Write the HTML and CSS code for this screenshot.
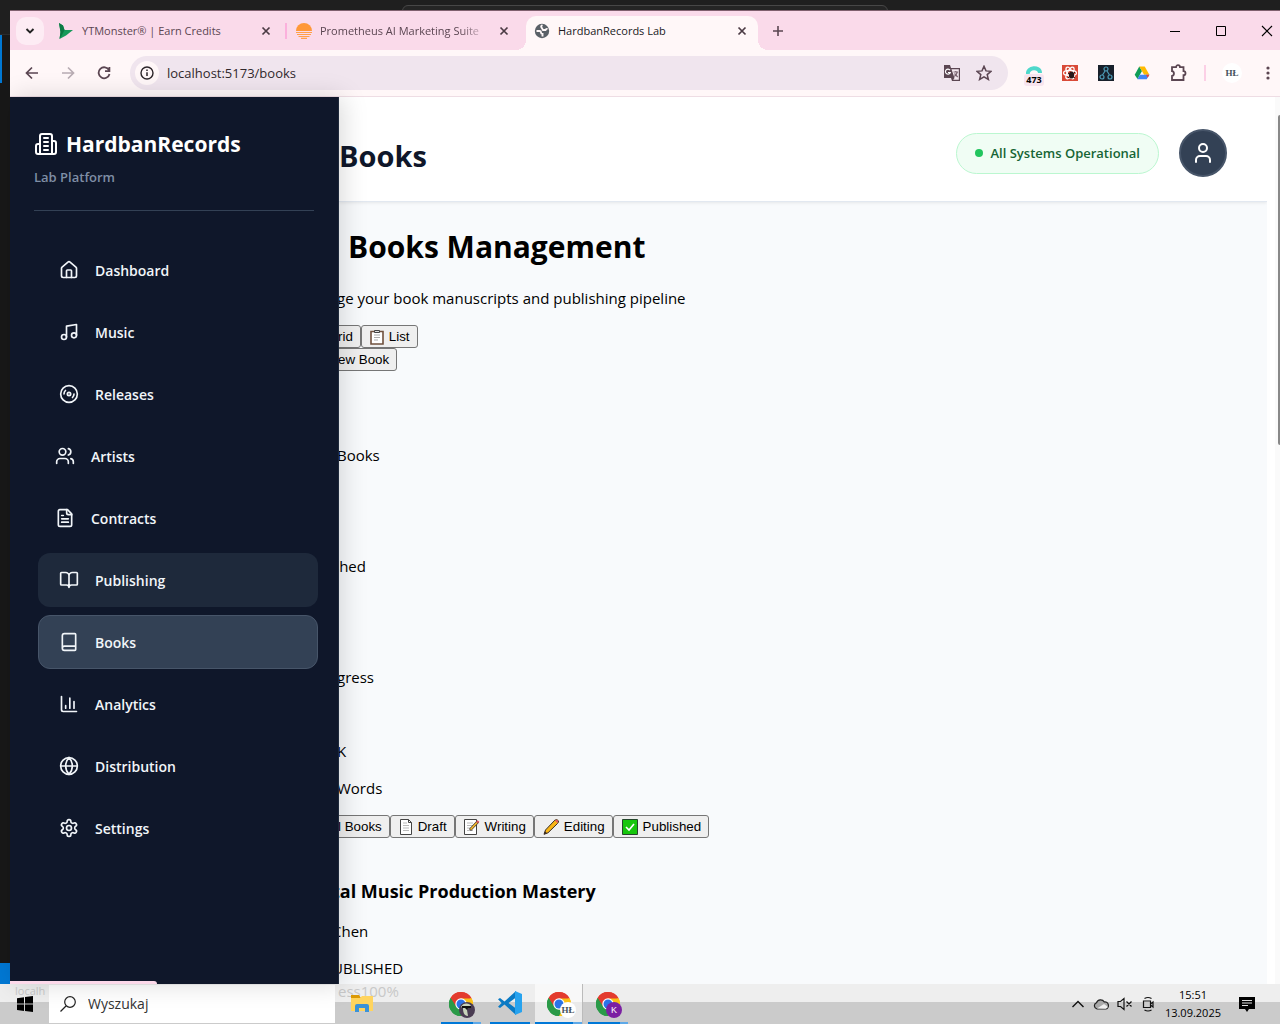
FILE: index.html
```html
<!DOCTYPE html>
<html lang="en">
<head>
<meta charset="utf-8">
<title>HardbanRecords Lab</title>
<link rel="stylesheet" href="styles.css">
</head>
<body>
<svg class="defs" aria-hidden="true">
  <symbol id="chrome" viewBox="0 0 24 24">
    <path fill="#e33b2e" d="M12 12 1.6 6A12 12 0 0 1 22.4 6z"/>
    <path fill="#fbc116" d="M12 12 22.4 6A12 12 0 0 1 12 24z"/>
    <path fill="#2a9a48" d="M12 12 12 24A12 12 0 0 1 1.6 6z"/>
    <path fill="#e33b2e" d="M12 6.4H22.6A12 12 0 0 0 1.6 6L7 14.8z"/>
    <path fill="#fbc116" d="M12 6.4H22.6A12 12 0 0 1 12 24l5-9z"/>
    <path fill="#2a9a48" d="M1.6 6 7.1 14.8 12 17.6h3.6L12 24A12 12 0 0 1 1.6 6z"/>
    <circle cx="12" cy="12" r="5.7" fill="#fff"/><circle cx="12" cy="12" r="4.5" fill="#2a73e8"/>
  </symbol>
  <symbol id="cross" viewBox="0 0 10 10"><path d="M1.5 1.5l7 7M8.5 1.5l-7 7" stroke="currentColor" stroke-width="1.7"/></symbol>
</svg>
<div class="desktop">
  <div class="editor-top"><div class="command-center"></div></div>
  <div class="workspace">
    <div class="editor-edge"><span class="edge-top"></span><span class="edge-mark"></span><span class="edge-fill"></span><span class="edge-status"></span></div>
    <div class="browser">
      <div class="tabs">
        <button class="tab-search" aria-label="Search tabs"><svg width="10" height="10" viewBox="0 0 10 10"><path d="M1.5 3 5 6.5 8.5 3" fill="none" stroke="#222" stroke-width="1.9"/></svg></button>
        <div class="tab">
          <svg width="16" height="16" viewBox="0 0 16 16"><path fill="#159a5a" d="M1 0 5 2.500 6.500 7 15 7 8 12.500 1.500 16 2.500 9z"/><path fill="#0b7a44" d="M1 0 5 2.500 6.500 7 4 12 1.500 16 2.500 9z"/></svg>
          <span class="tab-title">YTMonster® | Earn Credits</span>
          <button class="close" aria-label="Close"><svg width="10" height="10"><use href="#cross"/></svg></button>
        </div>
        <i class="tab-line"></i>
        <div class="tab second">
          <svg width="16" height="16" viewBox="0 0 16 16"><path fill="#ff9838" d="M0 8a8 8 0 0 1 16 0z"/><path d="M0 9.500h16M1 11.500h14M2.500 13.500h11M5 15.400h6" stroke="#ffa149" stroke-width="1.200"/></svg>
          <span class="tab-title fade">Prometheus AI Marketing Suite</span>
          <button class="close" aria-label="Close"><svg width="10" height="10"><use href="#cross"/></svg></button>
        </div>
        <div class="tab current">
          <svg width="16" height="16" viewBox="0 0 16 16"><circle cx="8" cy="8" r="7.200" fill="#5a6067"/><path d="M2.500 8h3q1.500 0 1.500 1.500T8.500 11v2.500M8.500 2.200Q6.500 3 7.500 4.500T9 7h2.500q.5-1.500 2-1" fill="none" stroke="#fff7f8" stroke-width="1.900"/></svg>
          <span class="tab-title">HardbanRecords Lab</span>
          <button class="close" aria-label="Close"><svg width="10" height="10"><use href="#cross"/></svg></button>
        </div>
        <button class="new-tab" aria-label="New tab"><svg width="12" height="12" viewBox="0 0 12 12"><path d="M6 1v10M1 6h10" stroke="#5b4652" stroke-width="1.600"/></svg></button>
        <div class="window-controls">
          <button aria-label="Minimize"><svg width="12" height="12" viewBox="0 0 12 12"><path d="M1 6.500h10" stroke="#000"/></svg></button>
          <button aria-label="Maximize"><svg width="12" height="12" viewBox="0 0 12 12"><path d="M1.500 1.500h9v9h-9z" fill="none" stroke="#000"/></svg></button>
          <button aria-label="Close window"><svg width="12" height="12" viewBox="0 0 12 12"><path d="M1 1l10 10M11 1 1 11" stroke="#000" stroke-width="1.100"/></svg></button>
        </div>
      </div>
      <div class="toolbar">
        <div class="nav-buttons">
          <button aria-label="Back"><svg width="14" height="14" viewBox="0 0 14 14"><path d="M13 7H2M7 1.500 1.500 7 7 12.500" fill="none" stroke="#5b4652" stroke-width="1.700"/></svg></button>
          <button aria-label="Forward"><svg width="14" height="14" viewBox="0 0 14 14"><path d="M1 7h11M7 1.500 12.500 7 7 12.500" fill="none" stroke="#b8acb3" stroke-width="1.700"/></svg></button>
          <button aria-label="Reload"><svg width="14" height="14" viewBox="0 0 14 14"><path d="M12 4.200A5.500 5.500 0 1 0 12.500 8M12.400 1v4.200H8" fill="none" stroke="#5b4652" stroke-width="1.800"/></svg></button>
        </div>
        <div class="omnibox">
          <button class="site-info" aria-label="Site information"><svg width="14" height="14" viewBox="0 0 14 14"><circle cx="7" cy="7" r="6" fill="none" stroke="#2c2529" stroke-width="1.400"/><path d="M7 6.200V10M7 3.600v1.500" stroke="#2c2529" stroke-width="1.500"/></svg></button>
          <input class="url" type="text" aria-label="Address" value="localhost:5173/books">
          <svg width="18" height="18" viewBox="0 0 18 18"><path d="M1 1h6l1 3h9v13H9l-1-3H1z" fill="#5b4652"/><path d="M8.500 5.300h7.300v10.500H10.200L11.500 14z" fill="#f4e8f0"/><path d="M10.500 8h4.700M12.800 7v1M14.300 8c-.5 2-1.500 3.500-3 4.500M11.500 9.500l3.200 3.500" fill="none" stroke="#7b6572" stroke-width="1.200"/><path d="M7 6.200A2.500 2.500 0 1 0 7.300 8.500H5" fill="none" stroke="#fff" stroke-width="1.200"/></svg>
          <svg class="star" width="16" height="16" viewBox="0 0 16 16"><path d="M8 1.300l2 4.600 5 .4-3.800 3.300 1.200 4.900L8 11.900l-4.400 2.600 1.200-4.900L1 6.300l5-.4z" fill="none" stroke="#5b4652" stroke-width="1.500"/></svg>
        </div>
        <div class="extensions">
          <span class="ext counter"><svg width="16" height="8" viewBox="0 0 16 8"><path d="M2 8C1 1 14 0 14 7" fill="none" stroke="#4fd8cb" stroke-width="4"/></svg><b>473</b></span>
          <span class="ext"><svg width="16" height="16" viewBox="0 0 16 16"><path fill="#d94a38" d="M0 0h16v16H0z"/><g fill="none" stroke="#fff" stroke-width="1.200"><ellipse cx="8" cy="8" rx="6.500" ry="2.600"/><ellipse cx="8" cy="8" rx="6.500" ry="2.600" transform="rotate(60 8 8)"/><ellipse cx="8" cy="8" rx="6.500" ry="2.600" transform="rotate(120 8 8)"/></g><ellipse cx="9.500" cy="10" rx="2.600" ry="3.500" fill="#27191a"/><path d="M6 8l7 5M13 7l-7 6" stroke="#27191a"/></svg></span>
          <span class="ext"><svg width="16" height="16" viewBox="0 0 16 16"><path fill="#18202b" d="M0 0h16v16H0z"/><g fill="none" stroke="#4d9bb6" stroke-width="1.200"><circle cx="8" cy="4" r="2"/><circle cx="4" cy="12" r="2"/><circle cx="12" cy="12" r="2"/><path d="M7 6 4.500 10M9 6l2.500 4"/></g></svg></span>
          <span class="ext"><svg width="16" height="16" viewBox="0 0 16 16"><path fill="#0f9d58" d="M5.300 1.500 8 6 3.500 14 .7 9.700z"/><path fill="#ffba00" d="M5.300 1.500h5.400l4.700 8.200h-5.300z"/><path fill="#4285f4" d="M5.900 9.700h9.500L12.700 14.300H3.300z"/><path fill="#ea4335" d="M12 9.700h3.400l-1.700 3z"/></svg></span>
          <span class="ext"><svg width="18" height="18" viewBox="0 0 18 18"><path d="M3 3.200h4a2 2 0 0 1 4 0h3.500v4a2 2 0 0 1 0 4V16H3v-4c2.600-.3 2.600-4.500 0-4.800z" fill="none" stroke="#5b4652" stroke-width="1.800"/></svg></span>
          <i class="ext-line"></i>
          <span class="profile">HŁ</span>
          <button class="menu" aria-label="Menu"><svg width="4" height="14" viewBox="0 0 4 14"><g fill="#5b4652"><circle cx="2" cy="2" r="1.600"/><circle cx="2" cy="7" r="1.600"/><circle cx="2" cy="12" r="1.600"/></g></svg></button>
        </div>
      </div>
      <div class="page">
        <aside class="sidebar">
          <div class="brand">
            <div class="brand-name"><svg class="line" width="24" height="24" viewBox="0 0 24 24"><path d="M6 22V4a2 2 0 0 1 2-2h8a2 2 0 0 1 2 2v18ZM6 12H4a2 2 0 0 0-2 2v6a2 2 0 0 0 2 2h2M18 9h2a2 2 0 0 1 2 2v9a2 2 0 0 1-2 2h-2M10 6h4M10 10h4M10 14h4M10 18h4"/></svg><strong>HardbanRecords</strong></div>
            <span class="tagline">Lab Platform</span>
          </div>
          <nav>
            <a href="#dashboard"><svg class="line" width="20" height="20" viewBox="0 0 24 24"><path d="M15 21v-8a1 1 0 0 0-1-1h-4a1 1 0 0 0-1 1v8"/><path d="M3 10a2 2 0 0 1 .709-1.528l7-5.999a2 2 0 0 1 2.582 0l7 5.999A2 2 0 0 1 21 10v9a2 2 0 0 1-2 2H5a2 2 0 0 1-2-2z"/></svg>Dashboard</a>
            <a href="#music"><svg class="line" width="20" height="20" viewBox="0 0 24 24"><path d="M9 18V5l12-2v13"/><circle cx="6" cy="18" r="3"/><circle cx="18" cy="16" r="3"/></svg>Music</a>
            <a href="#releases"><svg class="line" width="20" height="20" viewBox="0 0 24 24"><circle cx="12" cy="12" r="10"/><path d="M6 12c0-1.700.7-3.200 1.800-4.200M18 12c0 1.700-.7 3.200-1.800 4.200"/><circle cx="12" cy="12" r="2"/></svg>Releases</a>
            <a class="flat" href="#artists"><svg class="line" width="20" height="20" viewBox="0 0 24 24"><path d="M16 21v-2a4 4 0 0 0-4-4H6a4 4 0 0 0-4 4v2"/><circle cx="9" cy="7" r="4"/><path d="M22 21v-2a4 4 0 0 0-3-3.870M16 3.130a4 4 0 0 1 0 7.750"/></svg>Artists</a>
            <a class="flat" href="#contracts"><svg class="line" width="20" height="20" viewBox="0 0 24 24"><path d="M15 2H6a2 2 0 0 0-2 2v16a2 2 0 0 0 2 2h12a2 2 0 0 0 2-2V7Z"/><path d="M14 2v4a2 2 0 0 0 2 2h4M10 9H8M16 13H8M16 17H8"/></svg>Contracts</a>
            <a class="hovered" href="#publishing"><svg class="line" width="20" height="20" viewBox="0 0 24 24"><path d="M12 7v14M3 18a1 1 0 0 1-1-1V4a1 1 0 0 1 1-1h5a4 4 0 0 1 4 4 4 4 0 0 1 4-4h5a1 1 0 0 1 1 1v13a1 1 0 0 1-1 1h-6a3 3 0 0 0-3 3 3 3 0 0 0-3-3z"/></svg>Publishing</a>
            <a class="active" href="#books"><svg class="line" width="20" height="20" viewBox="0 0 24 24"><path d="M4 19.500v-15A2.500 2.500 0 0 1 6.500 2H19a1 1 0 0 1 1 1v18a1 1 0 0 1-1 1H6.500a1 1 0 0 1 0-5H20"/></svg>Books</a>
            <a href="#analytics"><svg class="line" width="20" height="20" viewBox="0 0 24 24"><path d="M3 3v16a2 2 0 0 0 2 2h16M18 17V9M13 17V5M8 17v-3"/></svg>Analytics</a>
            <a href="#distribution"><svg class="line" width="20" height="20" viewBox="0 0 24 24"><circle cx="12" cy="12" r="10"/><path d="M12 2a14.500 14.500 0 0 0 0 20 14.500 14.500 0 0 0 0-20M2 12h20"/></svg>Distribution</a>
            <a href="#settings"><svg class="line" width="20" height="20" viewBox="0 0 24 24"><path d="M12.220 2h-.44a2 2 0 0 0-2 2v.18a2 2 0 0 1-1 1.730l-.43.25a2 2 0 0 1-2 0l-.15-.08a2 2 0 0 0-2.730.73l-.22.38a2 2 0 0 0 .73 2.730l.15.1a2 2 0 0 1 1 1.720v.51a2 2 0 0 1-1 1.740l-.15.09a2 2 0 0 0-.73 2.730l.22.38a2 2 0 0 0 2.730.73l.15-.08a2 2 0 0 1 2 0l.43.25a2 2 0 0 1 1 1.730V20a2 2 0 0 0 2 2h.44a2 2 0 0 0 2-2v-.18a2 2 0 0 1 1-1.730l.43-.25a2 2 0 0 1 2 0l.15.08a2 2 0 0 0 2.730-.73l.22-.39a2 2 0 0 0-.73-2.730l-.15-.08a2 2 0 0 1-1-1.740v-.5a2 2 0 0 1 1-1.740l.15-.09a2 2 0 0 0 .73-2.730l-.22-.38a2 2 0 0 0-2.730-.73l-.15.08a2 2 0 0 1-2 0l-.43-.25a2 2 0 0 1-1-1.730V4a2 2 0 0 0-2-2z"/><circle cx="12" cy="12" r="3"/></svg>Settings</a>
          </nav>
          <div class="link-status"></div>
        </aside>
        <main>
          <header>
            <h1>Books</h1>
            <span class="health"><i></i>All Systems Operational</span>
            <button class="avatar" aria-label="Account"><svg class="line" width="24" height="24" viewBox="0 0 24 24"><path d="M19 21v-2a4 4 0 0 0-4-4H9a4 4 0 0 0-4 4v2"/><circle cx="12" cy="7" r="4"/></svg></button>
          </header>
          <section class="content">
            <h2>Books Management</h2>
            <p>ge your book manuscripts and publishing pipeline</p>
            <div class="buttons"><button class="under">rid</button><button><svg width="14" height="16" viewBox="1 0 14 16"><path fill="#fff" stroke="#70513e" stroke-width="1.600" d="M2 2.500h12v12.500H2z"/><path fill="#ddd" stroke="#444" d="M5.500 3.500v-2h5v2z"/><path stroke="#aaa" d="M5 6h6M5 8.500h6M5 11h4"/></svg>List</button></div>
            <div class="buttons"><button class="under">ew Book</button></div>
            <div class="stat"><span>Books</span></div>
            <div class="stat"><span class="under">shed</span></div>
            <div class="stat"><span>gress</span></div>
            <div class="stat"><span>K</span><span>Words</span></div>
            <div class="buttons"><button class="under">l Books</button><button><svg width="14" height="16" viewBox="1 0 14 16"><path fill="#fff" stroke="#444" d="M2.500.5h8l3 3v12h-11z"/><path stroke="#bbb" d="M5 4h4M5 6.500h6M5 9h6M5 11.500h6"/><path d="M10.500.5v3h3" fill="none" stroke="#444"/></svg>Draft</button><button><svg width="16" height="16" viewBox="0 0 16 16"><path fill="#fff" stroke="#444" d="M.5.500h12v15H.5z"/><path stroke="#bbb" d="M3 4h6M3 6.500h6M3 9h4M3 11.500h6"/><path d="M6 11 14 2.500" stroke="#3a3128" stroke-width="2.800"/><path d="M6.500 10.500 13 3.500" stroke="#f5b92d" stroke-width="1.800"/><path d="M13 3.500 14.500 2" stroke="#e35663" stroke-width="2.400"/></svg>Writing</button><button><svg width="16" height="16" viewBox="0 0 16 16"><path d="M1 15.300 2.500 11 11.800 1.200Q14-.2 15.300 1.700 16 3 14.500 4.500L5 13.800z" fill="#f9b514" stroke="#392c24"/><path d="M12 1.500Q14 0 15 2 15.500 3 14.300 4z" fill="#e35663"/><path d="M1 15.300l1-3 2 2z" fill="#392c24"/></svg>Editing</button><button><svg width="16" height="16" viewBox="0 0 16 16"><path fill="#16c60c" stroke="#24452b" d="M.5.500h15v15H.5z"/><path d="M4 8l3 3 5-6" fill="none" stroke="#fff" stroke-width="1.600"/></svg>Published</button></div>
            <h3 class="under">tal Music Production Mastery</h3>
            <p class="under">Chen</p>
            <p class="under">UBLISHED</p>
          </section>
        </main>
        <div class="scroll-track"><div class="scroll-thumb"></div></div>
      </div>
    </div>
  </div>
  <footer class="taskbar">
    <span class="ghost ghost-link">localh</span>
    <span class="ghost ghost-progress">ess100%</span>
    <button class="start" aria-label="Start"><svg width="16" height="16" viewBox="0 0 16 16"><path d="M0 2.200 7 1.200V7.600H0zM8 1 16 0v7.600H8zM0 8.500h7v6.400l-7-1zM8 8.500h8V16l-8-1z"/></svg></button>
    <label class="search"><svg width="16" height="16" viewBox="0 0 16 16"><circle cx="10" cy="6" r="5.300" fill="none" stroke="#222" stroke-width="1.200"/><path d="M6 10 .5 15.500" stroke="#222" stroke-width="1.200"/></svg><input type="text" placeholder="Wyszukaj" aria-label="Wyszukaj"></label>
    <button class="task explorer" aria-label="File Explorer"><svg width="22" height="20" viewBox="0 0 22 20"><path fill="#dc9a05" d="M0 1h8l2 3H0z"/><path fill="#ffd45e" d="M0 4h9l2-2h11v15H0z"/><path fill="#3a92d8" d="M4 18v-6q0-2 2-2h10q2 0 2 2v6h-4v-4H8v4z"/></svg></button>
    <button class="task running" aria-label="Chrome"><svg width="24" height="24"><use href="#chrome"/></svg><span class="badge photo"><svg width="16" height="16" viewBox="0 0 16 16"><circle cx="8" cy="8" r="8" fill="#4a3c52"/><path d="M2 5c2-5 9-4 10-1-2 1-4 1-4 4l1 6c-4 0-5-4-5-8z" fill="#c9d3bb"/><path d="M3 4h9v2H9L8 8 6 6H3z" fill="#111"/></svg></span></button>
    <button class="task solid" aria-label="Visual Studio Code"><svg width="24" height="24" viewBox="0 0 24 24"><path fill="#0a7ac4" d="M18 0 6.500 10.500 2 7 0 8.200 3.600 12 0 15.800 2 17 6.500 13.500 18 24V17.500L10.500 12 18 6.500z"/><path fill="#27a3ef" d="M17 0l7 3v18l-7 3z"/></svg></button>
    <button class="task running open" aria-label="Chrome, HardbanRecords"><svg width="24" height="24"><use href="#chrome"/></svg><span class="badge initials">HŁ</span></button>
    <button class="task running last" aria-label="Chrome, K"><svg width="24" height="24"><use href="#chrome"/></svg><span class="badge letter">K</span></button>
    <div class="tray">
      <svg width="14" height="16" viewBox="0 0 14 16"><path d="M1.500 11 7 5.500 12.500 11" fill="none" stroke="#111" stroke-width="1.400"/></svg>
      <svg width="16" height="16" viewBox="0 0 16 16"><path d="M4 13a3.300 3.300 0 0 1-.5-6.300A4.300 4.300 0 0 1 11.300 6 3.500 3.500 0 0 1 12.500 13z" fill="#aaa" stroke="#222" stroke-width="1.200"/><path d="M4 12.500 11 8l4 3-2 1.700z" fill="#eee"/></svg>
      <svg width="16" height="16" viewBox="0 0 16 16"><path d="M1 5.500h2.500L7 2.500v11l-3.500-3H1zM9.500 5.500l5 5M14.500 5.500l-5 5" fill="none" stroke="#111" stroke-width="1.200"/></svg>
      <svg width="14" height="16" viewBox="0 0 14 16"><path d="M2.500 5h7v6.500h-7zM9.500 8l2.500-2v5l-2.500-2M3.500 2.500q3.500-2 7 0M3.500 14q3.500 2 7 0" fill="none" stroke="#111" stroke-width="1.200"/></svg>
      <div class="clock"><span>15:51</span><span>13.09.2025</span></div>
      <svg width="16" height="16" viewBox="0 0 16 16"><path d="M0 1h16v12h-6l-2 3-2-3H0z"/><path d="M3 4.500h10M3 7h10M3 9.500h6" stroke="#ddd"/></svg>
    </div>
  </footer>
</div>
</body>
</html>
```

FILE: styles.css
```css
* { box-sizing: border-box; }
body {
  margin: 0;
  font: 15px/21px "Open Sans", "Noto Sans", sans-serif;
  color: #000;
}
button { font-family: "Liberation Sans", Arial, sans-serif; color: #000; }
svg { display: block; flex: none; }
.defs { display: none; }
.line { fill: none; stroke: currentColor; stroke-width: 2; stroke-linecap: round; stroke-linejoin: round; }
.desktop { display: flex; flex-direction: column; height: 100vh; min-height: 720px; background: #1f1f1f; overflow: hidden; }

/* editor window behind the browser */
.editor-top { height: 10px; flex: none; padding-top: 5px; overflow: hidden; }
.command-center { width: 38%; height: 22px; margin-left: 402px; border: 1px solid #474747; border-radius: 6px; background: #252525; }
.workspace { display: flex; flex: 1; min-height: 0; }
.editor-edge { display: flex; flex-direction: column; width: 10px; flex: none; background: #181818; }
.edge-top { height: 25px; background: #1f1f1f; border-bottom: 1px solid #2b2b2b; }
.edge-mark { width: 2px; height: 48px; background: #0078d4; }
.edge-fill { flex: 1; }
.edge-status { height: 21px; background: #0078d4; }

/* browser chrome */
.browser { flex: 1; min-width: 0; display: flex; flex-direction: column; border-top: 1px solid #80606f; }
.tabs { display: flex; align-items: center; height: 39px; flex: none; padding-left: 6px; background: #fadaea; font-size: 11px; }
.tabs button, .toolbar button { border: 0; padding: 0; background: none; display: flex; align-items: center; justify-content: center; }
.tabs .tab-search { width: 28px; height: 28px; border-radius: 10px; background: #fdecf4; }
.tab { display: flex; align-items: center; width: 241px; height: 34px; padding: 0 10px 0 14px; color: #5b4652; }
.tab.second { width: 239px; padding: 0 13px 0 9px; }
.tab-title { flex: 1; margin-left: 8px; white-space: nowrap; }
.fade { mask-image: linear-gradient(to right, #000 80%, transparent 96%); }
.tab .close { width: 18px; height: 18px; color: #4b3b44; }
.tab-line { width: 2px; height: 16px; background: #fbb0dc; }
.tab.current { position: relative; align-self: flex-end; width: 232px; padding: 0 7px 5px 8px; background: #fff7f8; border-radius: 10px 10px 0 0; color: #201a1d; }
.tab.current::before, .tab.current::after { content: ""; position: absolute; bottom: 0; width: 10px; height: 10px; }
.tab.current::before { right: 100%; background: radial-gradient(circle at 0 0, transparent 10px, #fff7f8 10px); }
.tab.current::after { left: 100%; background: radial-gradient(circle at 100% 0, transparent 10px, #fff7f8 10px); }
.tabs .new-tab { width: 40px; height: 28px; }
.window-controls { display: flex; margin-left: auto; margin-right: -10px; }
.window-controls button { width: 46px; height: 28px; }
.toolbar { display: flex; align-items: center; height: 47px; flex: none; background: #fff7f8; border-bottom: 1px solid #eedde4; }
.nav-buttons { display: flex; width: 120px; padding-left: 4px; }
.nav-buttons button { width: 36px; height: 34px; }
.omnibox { flex: 1; display: flex; align-items: center; height: 34px; padding: 0 16px 0 5px; border-radius: 17px; background: #f0e5ee; }
.omnibox .site-info { width: 24px; height: 24px; border-radius: 50%; background: #fff7f8; }
.url { flex: 1; border: 0; outline: 0; padding: 0; margin-left: 8px; background: none; color: #30292d; font: 13px/20px "Open Sans", sans-serif; }
.star { margin-left: 15px; }
.extensions { display: flex; align-items: center; width: 272px; padding-left: 8px; }
.ext { display: flex; flex-direction: column; align-items: center; width: 36px; }
.counter { padding-top: 5px; }
.counter b { font: bold 9px/12px "Open Sans", sans-serif; padding: 0 2px; background: #f7e4ee; border-radius: 3px; }
.ext-line { width: 2px; height: 16px; margin-left: 8px; background: #fcd0e6; }
.profile { width: 20px; height: 20px; margin-left: 16px; border-radius: 50%; background: #fff; color: #46505c; font: bold 9px/20px "Liberation Serif", serif; text-align: center; }
.toolbar .menu { width: 20px; height: 28px; margin-left: 16px; }

/* web page */
.page { flex: 1; min-height: 0; display: flex; background: #fff; }
.sidebar { position: relative; z-index: 1; display: flex; flex-direction: column; width: 329px; flex: none; padding: 32px 24px 0; background: #0f172a; border-right: 1px solid #1e293b; box-shadow: 4px 0 24px rgba(0, 0, 0, .15); color: #f1f5f9; }
.brand { height: 82px; border-bottom: 1px solid #334155; }
.brand-name { display: flex; align-items: center; gap: 8px; height: 30px; font-size: 21px; color: #fff; }
.tagline { display: block; margin-top: 8px; font-size: 13px; font-weight: 600; color: #7f8ea5; }
nav { display: flex; flex-direction: column; gap: 8px; margin: 32px -4px 0 4px; }
nav a { display: flex; align-items: center; gap: 16px; height: 54px; padding-left: 20px; border: 1px solid transparent; border-radius: 12px; color: inherit; font-size: 14px; font-weight: 600; text-decoration: none; }
nav .flat { padding-left: 16px; }
nav .hovered { background: #1e293b; }
nav .active { background: #334155; border-color: #475569; }
.link-status { width: 147px; height: 3px; margin: auto 0 0 -24px; background: #fcd9ea; border-radius: 0 3px 0 0; }
main { flex: 1; min-width: 0; display: flex; flex-direction: column; background: #f8fafc; overflow: hidden; }
header { display: flex; align-items: center; gap: 20px; height: 105px; flex: none; padding: 8px 40px 0 0; background: #fff; border-bottom: 1px solid #e2e8f0; box-shadow: 0 1px 3px rgba(0, 0, 0, .08); }
h1 { flex: 1; margin: 0; padding-top: 5px; font-size: 29px; line-height: 40px; color: #0f172a; }
.health { display: flex; align-items: center; gap: 8px; height: 41px; padding: 0 18px; border: 1px solid #bbf7d0; border-radius: 21px; background: #f0fdf4; color: #166534; font-size: 13px; font-weight: 600; }
.health i { width: 8px; height: 8px; border-radius: 50%; background: #22c55e; }
.avatar { display: flex; align-items: center; justify-content: center; width: 48px; height: 48px; padding: 0; border: 2px solid #475569; border-radius: 50%; background: #334155; color: #fff; }
.content { white-space: nowrap; }
h2 { margin: 24px 0 20px 9px; font-size: 30px; line-height: 42px; }
.content p { margin: 0 0 16px -2px; }
.content .buttons { display: flex; }
.buttons button { display: flex; align-items: center; gap: 5px; height: 23px; padding: 0 7px 0 8px; border: 1px solid #767676; border-radius: 3px; background: #efefef; }
.buttons .under { margin-left: -10px; }
.stat { display: flex; flex-direction: column; justify-content: flex-end; gap: 16px; height: 111px; padding-bottom: 16px; }
.stat span { margin-left: -2px; }
h3 { margin: 41px 0 18px; font-size: 18px; line-height: 24px; }
.content p.under, .content h3.under, .stat .under { margin-left: -7px; }
.scroll-track { width: 13px; flex: none; padding-top: 18px; background: linear-gradient(to right, #fff 8px, #fafafa 8px); }
.scroll-thumb { width: 2px; height: 38%; margin-left: auto; background: #888; border-radius: 2px 0 0 2px; }

/* taskbar */
.taskbar { position: relative; display: flex; align-items: stretch; height: 40px; flex: none; background: linear-gradient(#eee 18px, #cbcbcb 18px); }
.taskbar button { border: 0; padding: 0; background: none; display: flex; align-items: center; justify-content: center; }
.ghost { position: absolute; top: 0; line-height: 14px; color: #c8c8c8; }
.ghost-link { left: 15px; font-size: 11px; }
.ghost-progress { left: 338px; }
.taskbar .start { width: 49px; }
.search { display: flex; align-items: center; gap: 12px; width: 286px; margin: 1px 0; padding-left: 11px; background: #fff; }
.search input { border: 0; outline: 0; padding: 0; width: 200px; font: 14px/20px "Open Sans", sans-serif; }
.search input::placeholder { color: #333; opacity: 1; }
.taskbar .task { position: relative; width: 40px; margin-right: 9px; }
.taskbar .explorer { width: 54px; margin-right: 52px; }
.taskbar .solid { border-bottom: 2px solid #0078d7; margin-right: 5px; }
.running::after { content: ""; position: absolute; left: 0; right: 0; bottom: 0; height: 2px; background: linear-gradient(to right, #0078d7 80%, #5ea9e8 80%); }
.taskbar .open { width: 48px; background: rgba(255, 255, 255, .6); margin-right: 5px; border-right: 1px solid #bbb; }
.badge { position: absolute; right: 6px; bottom: 6px; width: 16px; height: 16px; border-radius: 50%; text-align: center; line-height: 16px; font-size: 9px; }
.initials { background: #fff; color: #46505c; font-family: "Liberation Serif", serif; font-weight: bold; }
.letter { background: #7b1fa2; color: #fff; }
.tray { display: flex; align-items: center; gap: 8px; margin-left: auto; padding-right: 25px; }
.clock { display: flex; flex-direction: column; align-items: center; font-size: 11px; line-height: 18px; margin: 0 10px 0 2px; }
```
